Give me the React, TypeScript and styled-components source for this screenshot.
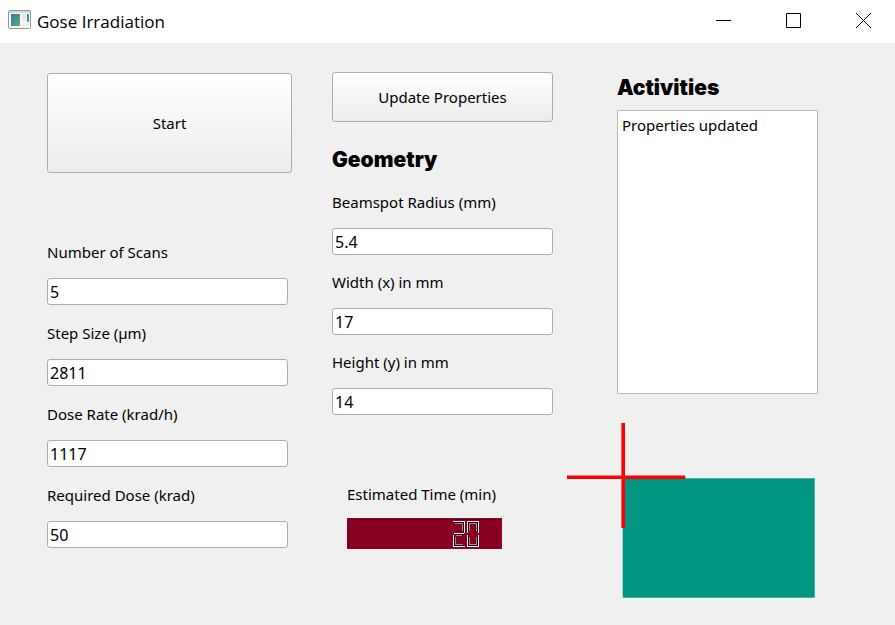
import React, { useState } from "react";
import styled, { createGlobalStyle } from "styled-components";

const GlobalStyle = createGlobalStyle`
  * { box-sizing: border-box; }
  body {
    margin: 0;
    background: #f0f0f0;
    color: #000;
    font-family: "Noto Sans", "Open Sans", sans-serif;
    font-size: 15px;
    line-height: 22px;
  }
`;

const Window = styled.div`
  min-height: 100vh;
  display: flex;
  flex-direction: column;
`;

const TitleBar = styled.header`
  display: flex;
  align-items: center;
  height: 43px;
  padding-left: 8px;
  background: #fff;
`;

const AppIcon = styled.svg`
  width: 23px;
  height: 20px;
  margin: 0 6px 4px 0;
`;

const Title = styled.h1`
  flex: 1;
  margin: 0;
  font-family: "Open Sans", sans-serif;
  font-size: 17px;
  font-weight: 400;
`;

const CaptionButtons = styled.div`
  display: flex;
  margin-right: -3px;
`;

const CaptionButton = styled.button`
  display: flex;
  align-items: center;
  justify-content: center;
  width: 70px;
  height: 41px;
  margin-bottom: 2px;
  padding: 0;
  border: 0;
  background: none;
`;

const Body = styled.main`
  display: flex;
  align-items: flex-start;
  padding: 29px 77px 27px 47px;
`;

const ControlColumn = styled.section`
  flex: 245 1 0;
  min-width: 0;
  margin-right: 40px;
  padding-top: 1px;
`;

const GeometryColumn = styled.section`
  flex: 221 1 0;
  min-width: 0;
  margin-right: 14px;
`;

const StatusColumn = styled.section`
  flex: 251 1 0;
  min-width: 0;
`;

const PushButton = styled.button<{ $height: number }>`
  display: block;
  width: 100%;
  height: ${(p) => p.$height}px;
  padding: 0;
  border: 1px solid #adadad;
  border-radius: 3px;
  background: linear-gradient(#fff, #ececec);
  color: #000;
  font: inherit;
`;

const FieldList = styled.div<{ $gap: number; $top: number; $inset?: number }>`
  display: flex;
  flex-direction: column;
  gap: ${(p) => p.$gap}px;
  margin-top: ${(p) => p.$top}px;
  margin-right: ${(p) => p.$inset ?? 0}px;
`;

const FieldRow = styled.div`
  display: flex;
  flex-direction: column;
  gap: 15px;
`;

const TextBox = styled.input`
  width: 100%;
  height: 27px;
  padding: 0 2px;
  border: 1px solid #adadad;
  border-radius: 3px;
  background: #fff;
  color: #000;
  font: inherit;
  font-size: 16px;
`;

const Heading = styled.h2`
  margin: 0;
  font-family: Inter, sans-serif;
  font-size: 21px;
  font-weight: 900;
  line-height: 28px;
`;

const GeometryHeading = styled(Heading)`
  margin-top: 24px;
`;

const Estimate = styled.div`
  display: flex;
  flex-direction: column;
  gap: 13px;
  width: 155px;
  margin: 68px 0 0 15px;
  white-space: nowrap;
`;

const Lcd = styled.output`
  display: flex;
  align-items: center;
  justify-content: flex-end;
  height: 31px;
  padding-right: 22px;
  border: 1px solid #a00028;
  background: #880022;
  box-shadow: inset 1px 1px #5a0017;
`;

const Activities = styled.div`
  padding: 2px 0 0 50px;
`;

const ActivityList = styled.ul`
  height: 284px;
  margin: 8px 0 0;
  padding: 3px 4px;
  border: 1px solid #b9b9b9;
  background: #fff;
  list-style: none;
`;

const BeamView = styled.svg`
  display: block;
  width: 100%;
  margin-top: 29px;
`;

interface FieldProps {
  id: string;
  label: string;
  initial: string;
}

function Field({ id, label, initial }: FieldProps) {
  const [value, setValue] = useState(initial);
  return (
    <FieldRow>
      <label htmlFor={id}>{label}</label>
      <TextBox id={id} value={value} onChange={(e) => setValue(e.target.value)} />
    </FieldRow>
  );
}

const doseFields: FieldProps[] = [
  { id: "scans", label: "Number of Scans", initial: "5" },
  { id: "step", label: "Step Size (µm)", initial: "2811" },
  { id: "rate", label: "Dose Rate (krad/h)", initial: "1117" },
  { id: "dose", label: "Required Dose (krad)", initial: "50" },
];

const geometryFields: FieldProps[] = [
  { id: "radius", label: "Beamspot Radius (mm)", initial: "5.4" },
  { id: "width", label: "Width (x) in mm", initial: "17" },
  { id: "height", label: "Height (y) in mm", initial: "14" },
];

/* Seven segments in a 12 x 26 cell: lit outer edge, shaded core, dim inner edge. */
const segments: Record<string, [string, string, string]> = {
  a: ["M0 .5H12", "M1 1.5H11", "M2 2.5H10"],
  b: ["M11.5 1V12", "M10.5 2V11", "M9.5 3V10"],
  c: ["M11.5 14V25", "M10.5 15V24", "M9.5 16V23"],
  d: ["M0 25.5H12", "M1 24.5H11", "M2 23.5H10"],
  e: ["M.5 14V25", "M1.5 15V24", "M2.5 16V23"],
  f: ["M.5 1V12", "M1.5 2V11", "M2.5 3V10"],
  g: ["M1 12.5H11", "M2 13.5H10", "M3 14.5H9"],
};

const digitSegments: Record<string, string> = {
  "0": "abcdef",
  "2": "abged",
};

function LcdNumber({ value }: { value: string }) {
  return (
    <svg width="26" height="26" viewBox="0 0 26 26" role="img" aria-label={value} fill="none">
      {value.split("").map((digit, i) => (
        <g key={i} transform={`translate(${i * 14} 0)`}>
          {digitSegments[digit].split("").map((s) => (
            <g key={s}>
              <path d={segments[s][2]} stroke="#a58a90" />
              <path d={segments[s][1]} stroke="#000" />
              <path d={segments[s][0]} stroke="#f4eef0" />
            </g>
          ))}
        </g>
      ))}
    </svg>
  );
}

export default function App() {
  return (
    <Window>
      <GlobalStyle />
      <TitleBar>
        <AppIcon viewBox="0 0 23 20" aria-hidden="true">
          <defs>
            <linearGradient id="pane" x1="0" y1="0" x2="1" y2="1">
              <stop offset="0" stopColor="#3d78a8" />
              <stop offset="1" stopColor="#55b070" />
            </linearGradient>
          </defs>
          <rect x=".5" y=".5" width="22" height="18" rx="1" fill="#f8f8f8" stroke="#92979c" />
          <path d="M1 2h21" stroke="#d5d9dd" strokeWidth="2" />
          <rect x="3" y="4" width="9" height="12" fill="url(#pane)" />
          <rect x="14" y="4" width="4" height="7" fill="#e7e7e7" />
          <rect x="19" y="4" width="2" height="8" fill="url(#pane)" />
          <rect x="14" y="13" width="7" height="3" fill="#ececec" />
        </AppIcon>
        <Title>Gose Irradiation</Title>
        <CaptionButtons>
          <CaptionButton aria-label="Minimize">
            <svg width="15" height="15" stroke="#000"><path d="M0 7.5h15" /></svg>
          </CaptionButton>
          <CaptionButton aria-label="Maximize">
            <svg width="15" height="15" stroke="#000" fill="none"><path d="M.5 .5h14v14h-14z" /></svg>
          </CaptionButton>
          <CaptionButton aria-label="Close">
            <svg width="15" height="15" stroke="#000"><path d="M0 0l15 15M15 0L0 15" /></svg>
          </CaptionButton>
        </CaptionButtons>
      </TitleBar>
      <Body>
        <ControlColumn>
          <PushButton $height={100}>Start</PushButton>
          <FieldList $gap={17} $top={68} $inset={4}>
            {doseFields.map((f) => <Field key={f.id} {...f} />)}
          </FieldList>
        </ControlColumn>
        <GeometryColumn>
          <PushButton $height={50}>Update Properties</PushButton>
          <GeometryHeading>Geometry</GeometryHeading>
          <FieldList $gap={16} $top={17}>
            {geometryFields.map((f) => <Field key={f.id} {...f} />)}
          </FieldList>
          <Estimate>
            <span id="estimate-label">Estimated Time (min)</span>
            <Lcd aria-labelledby="estimate-label"><LcdNumber value="20" /></Lcd>
          </Estimate>
        </GeometryColumn>
        <StatusColumn>
          <Activities>
            <Heading>Activities</Heading>
            <ActivityList>
              <li>Properties updated</li>
            </ActivityList>
          </Activities>
          <BeamView viewBox="0 0 251 175" role="img" aria-label="Beam position over the target area">
            <rect x="55.7" y="55.3" width="192" height="119.4" fill="#009681" />
            <path d="M56.2 0V105M0 54.2H118.3" stroke="#f00" strokeWidth="3.6" />
          </BeamView>
        </StatusColumn>
      </Body>
    </Window>
  );
}
